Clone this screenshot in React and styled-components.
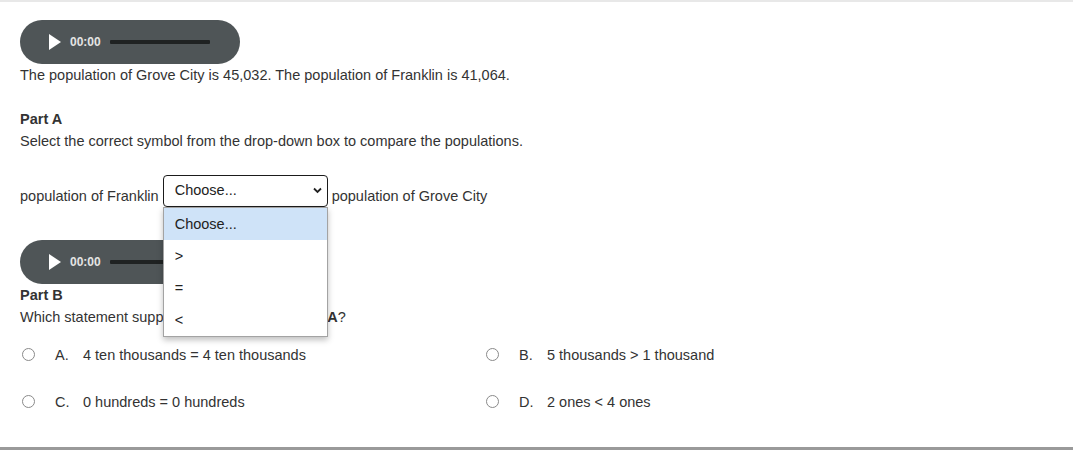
import React from "react";
import styled, { createGlobalStyle } from "styled-components";

const GlobalStyle = createGlobalStyle`
  body {
    margin: 0;
    background: #ffffff;
    font-family: "Liberation Sans", Arial, sans-serif;
  }
`;

const Card = styled.div`
  box-sizing: border-box;
  height: 450px;
  padding: 18px 20px 0;
  border-top: 2px solid #e8e8e8;
  border-bottom: 3px solid #9a9a9a;
  color: #333333;
  font-size: 14.5px;
  line-height: 22px;
`;

const Player = styled.div`
  display: flex;
  align-items: center;
  width: 220px;
  height: 44px;
  padding-left: 28px;
  box-sizing: border-box;
  border-radius: 22px;
  background: #4f5557;
  margin-top: ${(p) => p.$top || 0}px;
`;

const PlayIcon = styled.svg`
  width: 14px;
  height: 16px;
  margin-right: 8px;
`;

const Time = styled.span`
  font-size: 12px;
  font-weight: bold;
  color: #e4e4e4;
  line-height: 1;
`;

const Track = styled.div`
  width: 100px;
  height: 4px;
  margin-left: 9px;
  border-radius: 1px;
  background: #1f2222;
`;

const Para = styled.p`
  margin: ${(p) => p.$top || 0}px 0 0;
`;

const Heading = styled.div`
  font-weight: bold;
  margin-top: ${(p) => p.$top || 0}px;
`;

const CompareRow = styled.div`
  display: flex;
  align-items: flex-end;
  gap: 4px;
  margin-top: 23px;
`;

const RowText = styled.span`
  line-height: 21px;
`;

const SelectWrap = styled.div`
  position: relative;
  width: 165px;
`;

const Select = styled.select`
  appearance: none;
  box-sizing: border-box;
  width: 165px;
  height: 32px;
  padding: 0 24px 2px 11px;
  border: 1px solid #1b1b1b;
  border-radius: 4px;
  background: #ffffff;
  color: #222222;
  font-family: "Liberation Sans", Arial, sans-serif;
  font-size: 14.5px;
  outline: none;
`;

const Chevron = styled.svg`
  position: absolute;
  right: 6px;
  top: 12px;
  width: 9px;
  height: 7px;
  pointer-events: none;
`;

const Menu = styled.ul`
  position: absolute;
  top: 32px;
  left: 0;
  z-index: 5;
  box-sizing: border-box;
  width: 165px;
  margin: 0;
  padding: 0;
  list-style: none;
  background: #ffffff;
  border: 1px solid #a3a3a3;
  box-shadow: 0 3px 6px rgba(0, 0, 0, 0.25);
`;

const MenuItem = styled.li`
  height: 32px;
  line-height: 32px;
  padding-left: 11px;
  color: #222222;
  background: ${(p) => (p.$active ? "#cfe3f8" : "#ffffff")};
`;

const Choices = styled.div`
  display: grid;
  grid-template-columns: 464px 1fr;
  grid-auto-rows: 47px;
  margin-top: 3px;
`;

const Choice = styled.label`
  display: flex;
  align-items: center;
  padding-left: 2px;
`;

const Radio = styled.span`
  box-sizing: border-box;
  width: 13px;
  height: 13px;
  border: 1px solid #8a8a8a;
  border-radius: 50%;
  margin-right: 20px;
`;

const Letter = styled.span`
  width: 28px;
`;

const AudioPlayer = ({ top }) => (
  <Player $top={top}>
    <PlayIcon viewBox="0 0 14 16">
      <path d="M1 0 L13 8 L1 16 Z" fill="#ffffff" />
    </PlayIcon>
    <Time>00:00</Time>
    <Track />
  </Player>
);

const options = [
  ["A.", "4 ten thousands = 4 ten thousands"],
  ["B.", "5 thousands > 1 thousand"],
  ["C.", "0 hundreds = 0 hundreds"],
  ["D.", "2 ones < 4 ones"],
];

export default function App() {
  return (
    <>
      <GlobalStyle />
      <Card>
        <AudioPlayer />
        <Para>
          The population of Grove City is 45,032. The population of Franklin is 41,064.
        </Para>
        <Heading $top={22}>Part A</Heading>
        <Para>Select the correct symbol from the drop-down box to compare the populations.</Para>
        <CompareRow>
          <RowText>population of Franklin</RowText>
          <SelectWrap>
            <Select defaultValue="choose">
              <option value="choose">Choose...</option>
              <option value="gt">&gt;</option>
              <option value="eq">=</option>
              <option value="lt">&lt;</option>
            </Select>
            <Chevron viewBox="0 0 9 7">
              <path d="M1 1.5 L4.5 5 L8 1.5" fill="none" stroke="#222" strokeWidth="1.8" />
            </Chevron>
            <Menu>
              <MenuItem $active>Choose...</MenuItem>
              <MenuItem>&gt;</MenuItem>
              <MenuItem>=</MenuItem>
              <MenuItem>&lt;</MenuItem>
            </Menu>
          </SelectWrap>
          <RowText>population of Grove City</RowText>
        </CompareRow>
        <AudioPlayer top={33} />
        <Heading>Part B</Heading>
        <Para>
          Which statement supports your answer for <b>Part A</b>?
        </Para>
        <Choices>
          {options.map(([l, t]) => (
            <Choice key={l}>
              <Radio />
              <Letter>{l}</Letter>
              <span>{t}</span>
            </Choice>
          ))}
        </Choices>
      </Card>
    </>
  );
}
